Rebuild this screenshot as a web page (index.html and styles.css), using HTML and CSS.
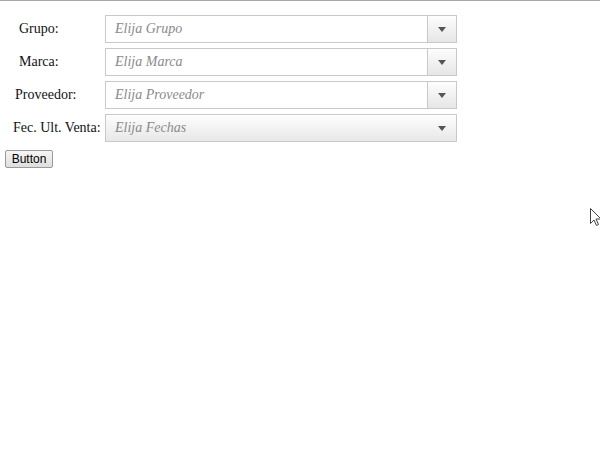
FILE: index.html
```html
<!DOCTYPE html>
<html lang="es">
<head>
    <meta charset="UTF-8">
    <title>Filtros</title>
    <link rel="stylesheet" href="styles.css">
</head>
<body>
    <div class="page">
        <div class="filters">
            <div class="filter-row">
                <label class="filter-label grupo">Grupo:</label>
                <div class="combo">
                    <span class="combo-text">Elija Grupo</span>
                    <span class="combo-btn"><span class="arrow"></span></span>
                </div>
            </div>
            <div class="filter-row">
                <label class="filter-label marca">Marca:</label>
                <div class="combo">
                    <span class="combo-text">Elija Marca</span>
                    <span class="combo-btn"><span class="arrow"></span></span>
                </div>
            </div>
            <div class="filter-row">
                <label class="filter-label proveedor">Proveedor:</label>
                <div class="combo">
                    <span class="combo-text">Elija Proveedor</span>
                    <span class="combo-btn"><span class="arrow"></span></span>
                </div>
            </div>
            <div class="filter-row">
                <label class="filter-label fecha">Fec. Ult. Venta:</label>
                <div class="combo combo-list">
                    <span class="combo-text">Elija Fechas</span>
                    <span class="combo-btn"><span class="arrow"></span></span>
                </div>
            </div>
        </div>
        <button class="plain-btn">Button</button>
    </div>

    <svg class="cursor" width="12" height="19" viewBox="0 0 12 19">
        <path d="M0.5 0.5 L0.5 15.5 L4 12 L6.5 17.5 L8.5 16.5 L6 11 L11 11 Z" fill="#fff" stroke="#444" stroke-width="1"/>
    </svg>
</body>
</html>
```

FILE: styles.css
```css
body {
    margin: 0;
    background-color: #fff;
    border-top: 1px solid #a8a8a8;
    font-family: 'Liberation Serif', 'Times New Roman', serif;
    color: #111;
}

.page {
    padding: 14px 0 0 5px;
}

.filters {
    display: flex;
    flex-direction: column;
    gap: 5px;
    width: 452px;
}

.filter-row {
    display: flex;
    align-items: center;
    height: 28px;
}

.filter-label {
    width: 100px;
    font-size: 14px;
    box-sizing: border-box;
}

.grupo { padding-left: 14px; }
.marca { padding-left: 14px; }
.proveedor { padding-left: 10px; }
.fecha { padding-left: 8px; }

.combo {
    flex: 1;
    display: flex;
    height: 28px;
    box-sizing: border-box;
    border: 1px solid #c9c9c9;
    background-color: #fff;
}

.combo-text {
    flex: 1;
    display: flex;
    align-items: center;
    padding-left: 9px;
    font-size: 14px;
    font-style: italic;
    color: #8a8a8a;
}

.combo-btn {
    width: 28px;
    display: flex;
    align-items: center;
    justify-content: center;
    border-left: 1px solid #c9c9c9;
    background: linear-gradient(#fdfdfd, #e6e6e6);
}

.arrow {
    width: 0;
    height: 0;
    border-left: 4px solid transparent;
    border-right: 4px solid transparent;
    border-top: 5px solid #555;
    margin-top: 1px;
}

.combo-list {
    background: linear-gradient(#fdfdfd, #e8e8e8);
}

.combo-list .combo-btn {
    border-left: none;
    background: none;
}

.plain-btn {
    margin-top: 8px;
    height: 18px;
    width: 48px;
    padding: 0;
    font-family: 'Liberation Sans', Arial, sans-serif;
    font-size: 12px;
    color: #000;
    border: 1px solid #9a9a9a;
    border-radius: 2px;
    background: linear-gradient(#f6f6f6, #dedede);
}

.cursor {
    position: absolute;
    left: 590px;
    top: 208px;
}
```
